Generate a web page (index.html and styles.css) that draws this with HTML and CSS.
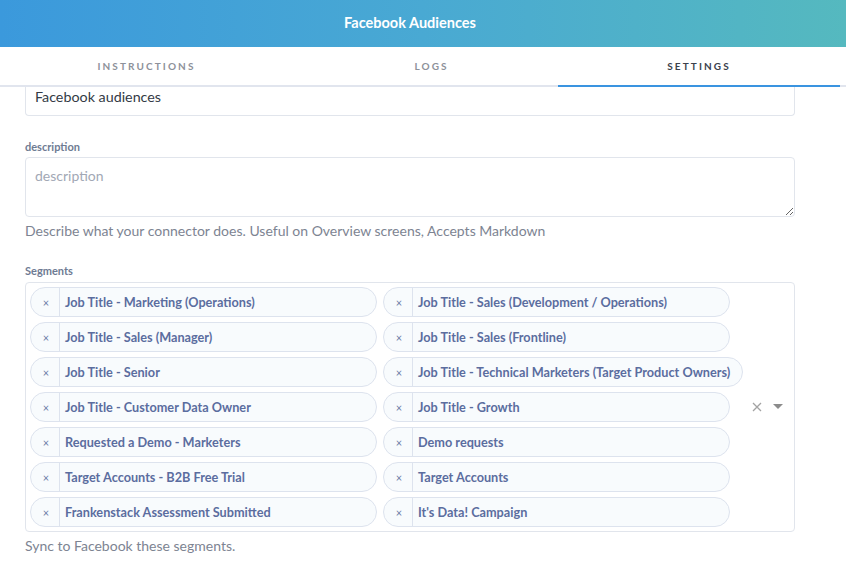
FILE: index.html
```html
<!DOCTYPE html>
<html>
<head>
<meta charset="utf-8">
<link rel="stylesheet" href="styles.css">
</head>
<body>
<div class="app">
  <header class="topbar"><div class="title">Facebook Audiences</div></header>
  <nav class="tabs">
    <div class="tab t1">INSTRUCTIONS</div>
    <div class="tab t2">LOGS</div>
    <div class="tab active">SETTINGS</div>
  </nav>
  <main class="content">
    <div class="input cut">Facebook audiences</div>
    <div class="field">
      <label class="label">description</label>
      <textarea class="textarea" placeholder="description"></textarea>
      <div class="help">Describe what your connector does. Useful on Overview screens, Accepts Markdown</div>
    </div>
    <div class="field seg">
      <label class="label">Segments</label>
      <div class="select">
        <div class="values">
          <div class="tag"><span class="rm">×</span><span class="txt">Job Title - Marketing (Operations)</span></div>
          <div class="tag"><span class="rm">×</span><span class="txt">Job Title - Sales (Development / Operations)</span></div>
          <div class="tag"><span class="rm">×</span><span class="txt">Job Title - Sales (Manager)</span></div>
          <div class="tag"><span class="rm">×</span><span class="txt">Job Title - Sales (Frontline)</span></div>
          <div class="tag"><span class="rm">×</span><span class="txt">Job Title - Senior</span></div>
          <div class="tag"><span class="rm">×</span><span class="txt">Job Title - Technical Marketers (Target Product Owners)</span></div>
          <div class="tag"><span class="rm">×</span><span class="txt">Job Title - Customer Data Owner</span></div>
          <div class="tag"><span class="rm">×</span><span class="txt">Job Title - Growth</span></div>
          <div class="tag"><span class="rm">×</span><span class="txt">Requested a Demo - Marketers</span></div>
          <div class="tag"><span class="rm">×</span><span class="txt">Demo requests</span></div>
          <div class="tag"><span class="rm">×</span><span class="txt">Target Accounts - B2B Free Trial</span></div>
          <div class="tag"><span class="rm">×</span><span class="txt">Target Accounts</span></div>
          <div class="tag"><span class="rm">×</span><span class="txt">Frankenstack Assessment Submitted</span></div>
          <div class="tag"><span class="rm">×</span><span class="txt">It's Data! Campaign</span></div>
        </div>
        <div class="indicators">
          <svg class="clear" width="10" height="10" viewBox="0 0 10 10"><path d="M1 1 L9 9 M9 1 L1 9" stroke="#a3a3a3" stroke-width="1.3" fill="none"/></svg>
          <svg class="arrow" width="10" height="6" viewBox="0 0 10 6"><path d="M0 0 L10 0 L5 5 Z" fill="#8c8c8c"/></svg>
        </div>
      </div>
      <div class="help">Sync to Facebook these segments.</div>
    </div>
  </main>
</div>
</body>
</html>
```
FILE: styles.css
```css
* { box-sizing: border-box; }
html, body { margin: 0; padding: 0; }
body {
  font-family: Lato, "Open Sans", "Liberation Sans", sans-serif;
  background: #fff;
  width: 846px;
  height: 582px;
  overflow: hidden;
}
.topbar {
  height: 47px;
  background: linear-gradient(90deg, #3b99dc 0%, #49a9d3 50%, #55b9bf 100%);
  display: flex;
  align-items: center;
  justify-content: center;
  padding-right: 26px;
}
.title {
  color: #fff;
  font-weight: 700;
  font-size: 14.5px;
  padding-bottom: 3px;
}
.tabs {
  display: grid;
  grid-template-columns: 279px 279px 282px;
  height: 40px;
  border-bottom: 2px solid #e1e5ee;
  position: relative;
}
.tab {
  display: flex;
  align-items: center;
  justify-content: center;
  font-size: 10px;
  font-weight: 700;
  letter-spacing: 2.1px;
  color: #8d919a;
  padding-left: 8px;
  margin-bottom: -2px;
  border-bottom: 2px solid transparent;
}
.tab.t1 { padding-left: 14px; }
.tab.t2 { padding-left: 26px; }
.tab.active {
  color: #3b414c;
  border-bottom-color: #3a94e0;
  padding-left: 0;
}
.content {
  padding: 0 51px 0 25px;
}
.input {
  border: 1px solid #e1e5ec;
  border-radius: 4px;
  font-size: 14.3px;
  color: #333a45;
  padding: 0 9px;
}
.input.cut {
  border-top: none;
  border-top-left-radius: 0;
  border-top-right-radius: 0;
  height: 29px;
  line-height: 20px;
}
.field { margin-top: 24px; }
.label {
  display: block;
  font-size: 11px;
  font-weight: 700;
  color: #6e7b93;
  line-height: 14px;
  margin-bottom: 3px;
}
.textarea {
  display: block;
  width: 100%;
  height: 60px;
  border: 1px solid #e1e5ec;
  border-radius: 4px;
  font-family: inherit;
  font-size: 14px;
  padding: 9px 9px;
  color: #333a45;
  resize: vertical;
  outline: none;
}
.textarea::placeholder { color: #a2a8b5; }
.help {
  font-size: 14px;
  color: #7d8492;
  margin-top: 5px;
  line-height: 18px;
}
.seg { margin-top: 24px; }
.seg .label { margin-bottom: 4px; }
.select {
  display: flex;
  border: 1px solid #e1e5ec;
  border-radius: 4px;
  padding: 4px;
}
.values {
  flex: 1;
  display: flex;
  flex-wrap: wrap;
  gap: 5px 6px;
  align-content: flex-start;
}
.tag {
  display: flex;
  align-items: stretch;
  height: 30px;
  min-width: 347px;
  border: 1px solid #dde3ee;
  border-radius: 15px;
  background: #f8fbfd;
  color: #5b6d9f;
}
.rm {
  width: 29px;
  display: flex;
  align-items: center;
  justify-content: center;
  border-right: 1px solid #dde3ee;
  font-size: 11px;
  color: #6a7aa6;
  padding-left: 2px;
}
.txt {
  display: flex;
  align-items: center;
  padding: 0 12px 0 5px;
  font-size: 12.7px;
  font-weight: 700;
  white-space: nowrap;
}
.indicators {
  width: 44px;
  display: flex;
  align-items: center;
  justify-content: flex-end;
  gap: 11px;
  padding-right: 7px;
}
```
